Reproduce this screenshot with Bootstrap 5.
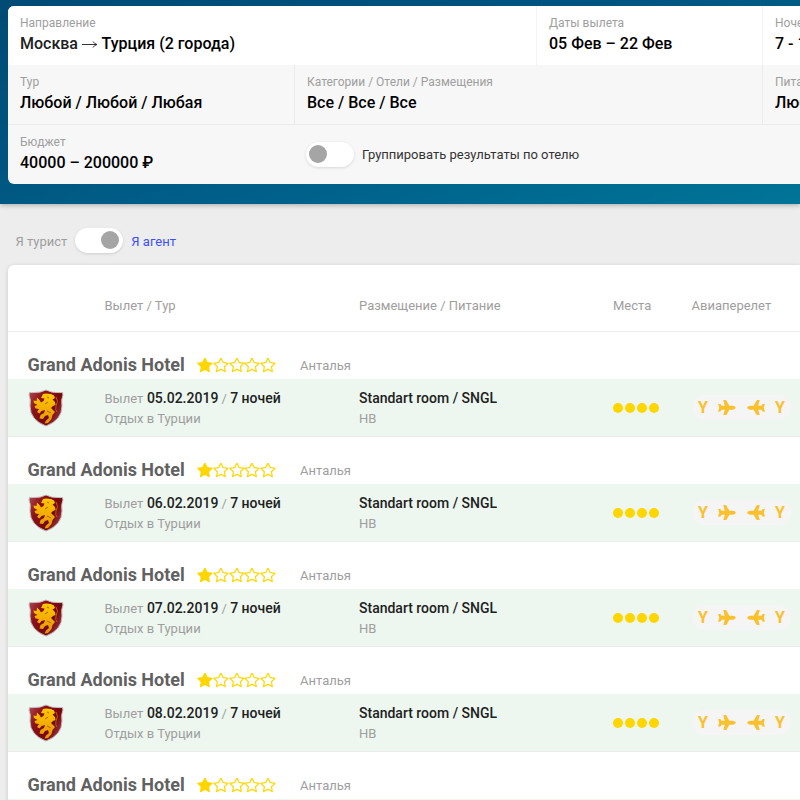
<!DOCTYPE html>
<html lang="ru">
<head>
<meta charset="utf-8">
<meta name="viewport" content="width=device-width, initial-scale=1">
<title>Поиск туров</title>
<link href="https://cdn.jsdelivr.net/npm/bootstrap@5.3.0/dist/css/bootstrap.min.css" rel="stylesheet">
<style>
body{font-family:Roboto,"Liberation Sans",sans-serif;font-size:13px;line-height:20px;color:#333;background:#ededed;height:800px;overflow:hidden}
.hero{height:204px;padding:6px 0 20px 8px;background:linear-gradient(165deg,#004b75 0%,#005580 40%,#00618a 65%,#007598 100%);box-shadow:0 1px 5px rgba(0,0,0,.3)}
.search{background:#f7f7f7;border-radius:6px 0 0 6px;overflow:hidden}
.line{height:59px}
.line-top{background:#fff}
.line-mid{height:60px;border-bottom:1px solid #ebebeb}
.cell{padding:7px 12px 0;border-right:1px solid #ebebeb;white-space:nowrap;flex:none}
.line-top .cell{border-color:#f3f3f3}
.line .cell.open{border-right:0}
.w-a{width:529px}.w-b{width:226px}.w-c{width:287px}.w-d{width:468px}
.cap{font-size:12px;line-height:20px;color:#9e9e9e}
.val{font-size:16px;line-height:21px;font-weight:500;color:#000}
.from{color:#212121}
.arrow{width:16px;height:9px;fill:none;stroke:#333;stroke-width:1;vertical-align:1px}
.toggle{width:48px;height:25px;background:#fff;border-radius:13px;padding:3px 4px 4px 3px;box-shadow:0 1px 3px rgba(0,0,0,.13)}
.knob{width:18px;height:18px;border-radius:50%;background:#a5a5a5}
.group{padding-left:11px}
.who{height:61px;padding:24px 0 0 15.5px;color:#9e9e9e}
.who .toggle{margin:0 8.500px 0 7.500px}
.agent{color:#3d4eff}
.results{margin-left:8px;background:#fff;border-radius:6px 0 0 0;box-shadow:0 1px 4px rgba(0,0,0,.16)}
.heads{height:67px;padding-top:31px;border-bottom:1px solid #ebebeb;color:#9e9e9e}
.heads>*,.offer>*{flex:none}
.c-logo{width:96.500px;padding-left:19px}.c-tour{width:254.500px}.c-room{width:254px}.c-seats{width:78.500px}
.hotel{height:47px;padding:21px 0 0 19.500px}
.hotel-name{font-size:18px;line-height:24px;font-weight:700;color:#616161;width:169.500px;white-space:nowrap;margin-top:-2px}
.stars{width:103px;height:15px;color:#ffd600;margin-top:-2px}
.star{width:15.8px;height:15px;fill:currentColor}
.offer{height:58px;background:#edf7ef;border-bottom:1px solid #ebebeb}
.soft{color:#9e9e9e}
.strong-txt{font-size:14px;font-weight:500;color:#212121}
.date{margin-left:.4px}
.txt{padding-top:9px}
.board{padding-top:1px}
.shield{width:38px;height:38px;margin-top:10px}
.seat{width:10px;height:10px;border-radius:50%;background:#ffd600}
.seats{gap:2px;padding-top:24px}
.flight{width:99px;height:25px;margin-top:16px;border-radius:13px;background:#f5f5f5;color:#fbc02d;padding:0 5.500px 0 6.500px;font-size:16px;font-weight:700}
.plane{width:18px;height:15.500px;fill:currentColor;margin:0 .5px 0 -1px}
.back{transform:scaleX(-1);margin:0 -1px 0 .5px}
</style>
<script src="https://cdn.jsdelivr.net/npm/bootstrap@5.3.0/dist/js/bootstrap.bundle.min.js"></script>
</head>
<body>
<svg width="0" height="0" class="position-absolute" aria-hidden="true">
<defs>
<linearGradient id="red" x1="0" x2="1" y1="0" y2=".6"><stop offset="0" stop-color="#b04a50"/><stop offset=".35" stop-color="#8c121a"/><stop offset=".75" stop-color="#74060c"/><stop offset="1" stop-color="#98323a"/></linearGradient>
<linearGradient id="gold" x1="0" x2="0" y1="0" y2="1"><stop offset="0" stop-color="#ffc800"/><stop offset="1" stop-color="#e69500"/></linearGradient>
</defs>
<symbol id="star-full" viewBox="64 110 1664 1580"><path d="M1728 647q0 22-26 48l-363 354 86 500q1 7 1 20 0 21-10.500 35.500t-30.500 14.500q-19 0-40-12l-449-236-449 236q-22 12-40 12-21 0-31.500-14.500t-10.500-35.500q0-6 2-20l86-500-364-354q-25-27-25-48 0-37 56-46l502-73 225-455q19-41 49-41t49 41l225 455 502 73q56 9 56 46z"/></symbol>
<symbol id="star-line" viewBox="64 110 1664 1580"><path d="M1201 1004l306-297-422-62-189-382-189 382-422 62 306 297-73 421 378-199 377 199zm527-357q0 22-26 48l-363 354 86 500q1 7 1 20 0 50-41 50-19 0-40-12l-449-236-449 236q-22 12-40 12-21 0-31.500-14.500t-10.500-35.500q0-6 2-20l86-500-364-354q-25-27-25-48 0-37 56-46l502-73 225-455q19-41 49-41t49 41l225 455 502 73q56 9 56 46z"/></symbol>
<symbol id="plane" viewBox="0 0 576 512"><path d="M480 192H365.700L260.600 8.060A16 16 0 0 0 246.700 0h-65.500c-10.600 0-18.300 10.200-15.400 20.400L214.900 192H112l-43.200-57.600c-3-4-7.800-6.400-12.800-6.400H16C5.600 128-2 137.800.5 147.900L32 256 .5 364.100C-2 374.200 5.600 384 16 384h40c5 0 9.800-2.400 12.800-6.400L112 320h102.900l-49 171.600c-2.900 10.200 4.700 20.400 15.300 20.400h65.500c5.700 0 11-3.100 13.900-8.100L365.700 320H480c35.400 0 96-28.600 96-64s-60.600-64-96-64z"/></symbol>
<symbol id="shield" viewBox="0 0 38 38"><path d="M2.500 3.500Q5 3.800 7 3.500Q13 4 19 1Q25 4 31 3.500Q33 3.800 35.500 3.500L36 6Q34 10 35 17Q35 31 19 37Q3 31 3 17Q4 10 2 6Z" fill="url(#red)" stroke="#c9b9b9" stroke-width="1"/><path d="M16 5L19 4.500L24 5L27 6.500L28 9L25.500 10.500L28 13L28.500 16L26 17L24 19L26 21L28 23L25.500 26L24.500 30L21 34L17.500 34.500L19 31.500L22 29L21 26L18 27L16 30L12.500 29.500L13.500 26L17 24L18 21L14.500 22L12.500 24.500L10 23L12 20L8.500 19.500L7.500 17L10.500 16L7 14L6.500 11.500L9.500 12L10 8.500L12.500 11L14 13.500L16.500 12L17.500 9.500L14 9Z" fill="url(#gold)"/><path d="M20 8l2 1M18 15l3-2M20 22l4 2M29 8q3 4 0 9q-1 4 1 6" fill="none" stroke="#b86208" stroke-width="1"/></symbol>
</svg>

<header class="hero position-relative">
  <div class="search">
    <div class="line line-top d-flex">
      <div class="cell w-a"><div class="cap">Направление</div><div class="val"><span class="from">Москва</span> <svg class="arrow" viewBox="0 0 16 9"><path d="M0 5.500H14.500M11 2.500Q12.500 5 15 5.500Q12.500 6 11 8.500"/></svg> Турция (2 города)</div></div>
      <div class="cell w-b"><div class="cap">Даты вылета</div><div class="val">05 Фев – 22 Фев</div></div>
      <div class="cell open"><div class="cap">Ночей</div><div class="val">7 - 14</div></div>
    </div>
    <div class="line line-mid d-flex">
      <div class="cell w-c"><div class="cap">Тур</div><div class="val">Любой / Любой / Любая</div></div>
      <div class="cell w-d"><div class="cap">Категории / Отели / Размещения</div><div class="val">Все / Все / Все</div></div>
      <div class="cell open"><div class="cap">Питание</div><div class="val">Любое</div></div>
    </div>
    <div class="line d-flex">
      <div class="cell open w-c"><div class="cap">Бюджет</div><div class="val">40000 – 200000 ₽</div></div>
      <div class="group d-flex align-items-center"><div class="toggle d-flex align-items-center"><div class="knob"></div></div><span class="ms-2">Группировать результаты по отелю</span></div>
    </div>
  </div>
</header>

<div class="who d-flex align-items-start">
  <span class="pt-1">Я турист</span>
  <div class="toggle d-flex align-items-center justify-content-end"><div class="knob"></div></div>
  <span class="agent pt-1">Я агент</span>
</div>

<main class="results">
  <div class="heads d-flex"><div class="c-logo"></div><div class="c-tour">Вылет / Тур</div><div class="c-room">Размещение / Питание</div><div class="c-seats">Места</div><div>Авиаперелет</div></div>
  <div id="list"></div>
</main>

<template id="row">
  <section>
    <div class="hotel d-flex align-items-center">
      <div class="hotel-name">Grand Adonis Hotel</div>
      <div class="stars d-flex"><svg class="star"><use href="#star-full"/></svg><svg class="star"><use href="#star-line"/></svg><svg class="star"><use href="#star-line"/></svg><svg class="star"><use href="#star-line"/></svg><svg class="star"><use href="#star-line"/></svg></div>
      <span class="soft">Анталья</span>
    </div>
    <div class="offer d-flex align-items-start">
      <div class="c-logo"><svg class="shield d-block"><use href="#shield"/></svg></div>
      <div class="c-tour txt soft"><div>Вылет <span class="strong-txt date"></span> / <span class="strong-txt">7 ночей</span></div><div>Отдых в Турции</div></div>
      <div class="c-room txt soft"><div class="strong-txt">Standart room / SNGL</div><div class="board">HB</div></div>
      <div class="c-seats seats d-flex"><i class="seat"></i><i class="seat"></i><i class="seat"></i><i class="seat"></i></div>
      <div class="flight d-flex align-items-center justify-content-between"><span>Y</span><svg class="plane"><use href="#plane"/></svg><svg class="plane back"><use href="#plane"/></svg><span>Y</span></div>
    </div>
  </section>
</template>
<script>
const list = document.getElementById('list');
const row = document.getElementById('row');
for (const date of ['05.02.2019', '06.02.2019', '07.02.2019', '08.02.2019', '09.02.2019']) {
  const item = row.content.cloneNode(true);
  item.querySelector('.date').textContent = date;
  list.append(item);
}
</script>
</body>
</html>
